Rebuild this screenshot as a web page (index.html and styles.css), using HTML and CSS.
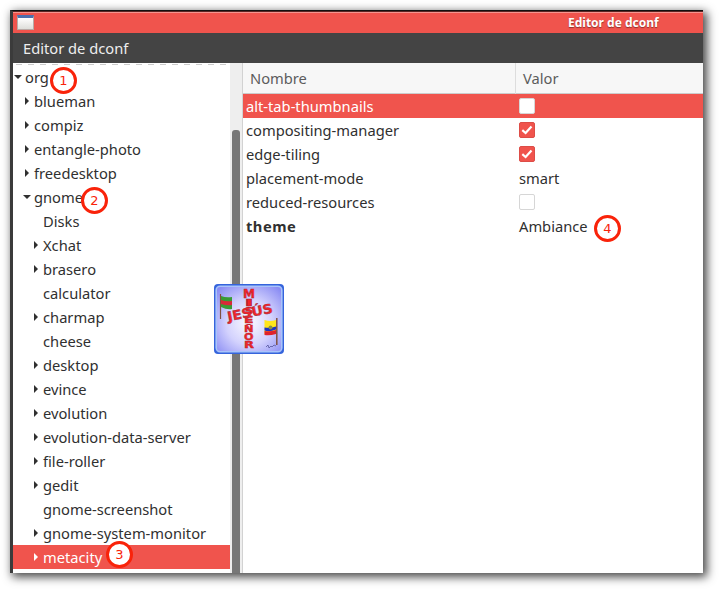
FILE: index.html
```
<!DOCTYPE html>
<html lang="es">
<head>
<meta charset="utf-8">
<title>Editor de dconf</title>
<link rel="stylesheet" href="styles.css">
</head>
<body>
<main class="window">
  <header class="titlebar"><span class="app-icon"></span><span class="title">Editor de dconf</span></header>
  <div class="menubar">Editor de dconf</div>
  <div class="content">
    <ul class="tree">
      <li class="l0 open">org<b class="badge b1">1</b></li>
      <li class="l1 closed">blueman</li>
      <li class="l1 closed">compiz</li>
      <li class="l1 closed">entangle-photo</li>
      <li class="l1 closed">freedesktop</li>
      <li class="l1 open">gnome<b class="badge b2">2</b></li>
      <li class="l2">Disks</li>
      <li class="l2 closed">Xchat</li>
      <li class="l2 closed">brasero</li>
      <li class="l2">calculator</li>
      <li class="l2 closed">charmap</li>
      <li class="l2">cheese</li>
      <li class="l2 closed">desktop</li>
      <li class="l2 closed">evince</li>
      <li class="l2 closed">evolution</li>
      <li class="l2 closed">evolution-data-server</li>
      <li class="l2 closed">file-roller</li>
      <li class="l2 closed">gedit</li>
      <li class="l2">gnome-screenshot</li>
      <li class="l2 closed">gnome-system-monitor</li>
      <li class="l2 closed selected">metacity<b class="badge b3">3</b></li>
    </ul>
    <div class="scrollbar"><div class="thumb"></div></div>
    <section class="table">
      <div class="row head"><span>Nombre</span><span>Valor</span></div>
      <div class="row selected"><span>alt-tab-thumbnails</span><span><i class="check"></i></span></div>
      <div class="row"><span>compositing-manager</span><span><i class="check on"><svg viewBox="0 0 16 16"><path d="M3.3 8.2 6.6 11 12.5 4.6"/></svg></i></span></div>
      <div class="row"><span>edge-tiling</span><span><i class="check on"><svg viewBox="0 0 16 16"><path d="M3.3 8.2 6.6 11 12.5 4.6"/></svg></i></span></div>
      <div class="row"><span>placement-mode</span><span>smart</span></div>
      <div class="row"><span>reduced-resources</span><span><i class="check"></i></span></div>
      <div class="row"><span class="strong">theme</span><span>Ambiance<b class="badge b4">4</b></span></div>
    </section>
  </div>
</main>
<svg class="logo" viewBox="0 0 70 70">
  <defs>
    <radialGradient id="sky" cx="50%" cy="55%" r="70%"><stop offset="0" stop-color="#fbfaff"/><stop offset=".5" stop-color="#d3d2fd"/><stop offset="1" stop-color="#8789f3"/></radialGradient>
  </defs>
  <rect width="70" height="70" rx="4" fill="#3564dc"/>
  <rect x="2.2" y="2.2" width="65.6" height="65.6" rx="4" fill="url(#sky)" stroke="#a9c4fa" stroke-width="1.6"/>
  <path d="M6.500 10V35" stroke="#80503f" stroke-width="1.200"/>
  <path d="M7 12q5 2 11 1v12q-5 1-11-2z" fill="#389b35"/>
  <path d="M7 16q5 2 11 1v4q-5 1-11-1z" fill="#d82938"/>
  <path d="M62.800 34V61" stroke="#80503f" stroke-width="1.500"/>
  <path d="M62 36q-6 2-11.500 0v14q5 2 11.500-1z" fill="#ffe61a"/>
  <path d="M62 42.500q-6 2-11.500 1v3q5 2 11.500-1z" fill="#1b35c4"/>
  <path d="M62 46q-6 2-11.500 1v4q5 1 11.500-1z" fill="#e0222c"/>
  <circle cx="56.500" cy="43.500" r="2" fill="#8a8f45"/>
  <g class="letters">
    <text x="29" y="13.800" font-size="12" textLength="12" lengthAdjust="spacingAndGlyphs">M</text>
    <text x="30.500" y="21.500" font-size="8.500" textLength="9" lengthAdjust="spacingAndGlyphs">I</text>
    <text x="30.500" y="30" font-size="9" textLength="9" lengthAdjust="spacingAndGlyphs">S</text>
    <text x="30" y="38.500" font-size="9.500" textLength="9.500" lengthAdjust="spacingAndGlyphs">E</text>
    <text x="30" y="47.500" font-size="9" textLength="9.500" lengthAdjust="spacingAndGlyphs">Ñ</text>
    <text x="30" y="55.500" font-size="9.500" textLength="9.500" lengthAdjust="spacingAndGlyphs">O</text>
    <text x="30" y="63.500" font-size="9.500" textLength="10" lengthAdjust="spacingAndGlyphs">R</text>
    <text class="word" x="13" y="33" font-size="13" transform="rotate(-11 36 29)" textLength="46" lengthAdjust="spacingAndGlyphs">JESÚS</text>
  </g>
  <path d="M52 63l2-2 1 3 2-2 1 1 2-2 2 1" fill="none" stroke="#4b4b92" stroke-width=".7"/>
</svg>
</body>
</html>
```
FILE: styles.css
```
* { box-sizing: border-box; }
body {
  margin: 0;
  width: 719px;
  height: 589px;
  padding: 10px 0 0 10px;
  background: #fff;
  overflow: hidden;
  font: 14.7px/24px "Noto Sans", sans-serif;
  color: #303030;
}
.window {
  width: 693px;
  height: 563px;
  border-left: 3px solid #3b3b3b;
  border-top: 1px solid #111;
  background: #fff;
  box-shadow: 3px 3px 9px 1px rgba(0, 0, 0, .72);
}
.titlebar {
  display: flex;
  height: 22px;
  align-items: center;
  background: #f0544d;
  border-top: 1px solid #5c2522;
  box-shadow: inset 0 1px #f5958f;
  color: #fff;
}
.app-icon {
  width: 17px;
  height: 15px;
  margin: 0 0 1px 4px;
  border: 1px solid #b9aaa6;
  border-top: 3px solid #4d6fae;
  background: linear-gradient(#fff, #dededa);
}
.title {
  margin-left: 534px;
  font-size: 12px;
  font-weight: 700;
  white-space: nowrap;
  text-shadow: 0 1px 1px #8d302c;
}
.menubar {
  height: 30px;
  padding-left: 10px;
  line-height: 30px;
  background: #444;
  color: #eee;
}
.content { display: flex; height: 510px; }
.tree {
  width: 217px;
  margin: 0;
  padding: 2px 0 0;
  list-style: none;
  background: repeating-linear-gradient(90deg, transparent 0 3px, #ccc 3px 9px, transparent 9px 12px) 0 1px / 100% 1px no-repeat;
}
.tree li { position: relative; height: 24px; line-height: 25px; white-space: nowrap; }
.tree .l0 { padding-left: 12px; --x: 1px; }
.tree .l1 { padding-left: 21px; --x: 10px; }
.tree .l2 { padding-left: 30px; --x: 19px; }
.tree li::before { position: absolute; content: ""; }
.tree .open::before {
  left: var(--x);
  top: 10px;
  border: 4px solid transparent;
  border-top-color: #303030;
  border-bottom: 0;
}
.tree .closed::before {
  left: calc(var(--x) + 2px);
  top: 8px;
  border: 4px solid transparent;
  border-left-color: #303030;
  border-right: 0;
}
.tree .selected, .row.selected { background: #f0544d; color: #fff; }
.tree .selected::before { border-left-color: #fff; }
.scrollbar { width: 13px; padding: 67px 2px 0; background: #eee; border-right: 1px solid #d2d2d2; }
.thumb { height: 443px; width: 8px; border-radius: 3px 3px 0 0; background: #777; }
.table { flex: 1; }
.row { display: grid; grid-template-columns: 272px 1fr; height: 24px; line-height: 25px; }
.row > span { position: relative; padding-left: 3px; white-space: nowrap; }
.row > span + span { padding-left: 4px; }
.row.head { height: 31px; line-height: 31px; background: #f7f7f7; border-bottom: 1px solid #ccc; color: #5c5c5c; }
.row.head > span { padding-left: 7px; }
.row.head > span + span { border-left: 1px solid #ddd; }
.row .strong { font-weight: 700; letter-spacing: .5px; }
.check {
  display: block;
  width: 16px;
  height: 16px;
  margin-top: 4px;
  border: 1px solid #d6d6d6;
  border-radius: 2px;
  background: #fff;
}
.check.on { border-color: #dd4d47; background: #f0544d; }
.check svg { display: block; width: 16px; height: 16px; margin: -1px; fill: none; stroke: #fff; stroke-width: 2.2; }
.badge {
  position: absolute;
  z-index: 1;
  width: 27px;
  height: 27px;
  border: 3px solid #f9230a;
  border-radius: 50%;
  background: #fff;
  color: #f9230a;
  font: 13px/21px "DejaVu Sans", sans-serif;
  text-align: center;
}
.b1 { left: 37px; top: 2px; }
.b2 { left: 68px; top: 2px; }
.b3 { left: 93px; top: -4px; }
.b4 { left: 79px; top: 1px; }
.logo { position: absolute; left: 214px; top: 284px; width: 70px; height: 70px; }
.letters {
  font-family: "DejaVu Sans", sans-serif;
  font-weight: 700;
  fill: #f3252a;
  stroke: #b02030;
  stroke-width: .4;
}
.letters .word { stroke: #8a3048; }
```
